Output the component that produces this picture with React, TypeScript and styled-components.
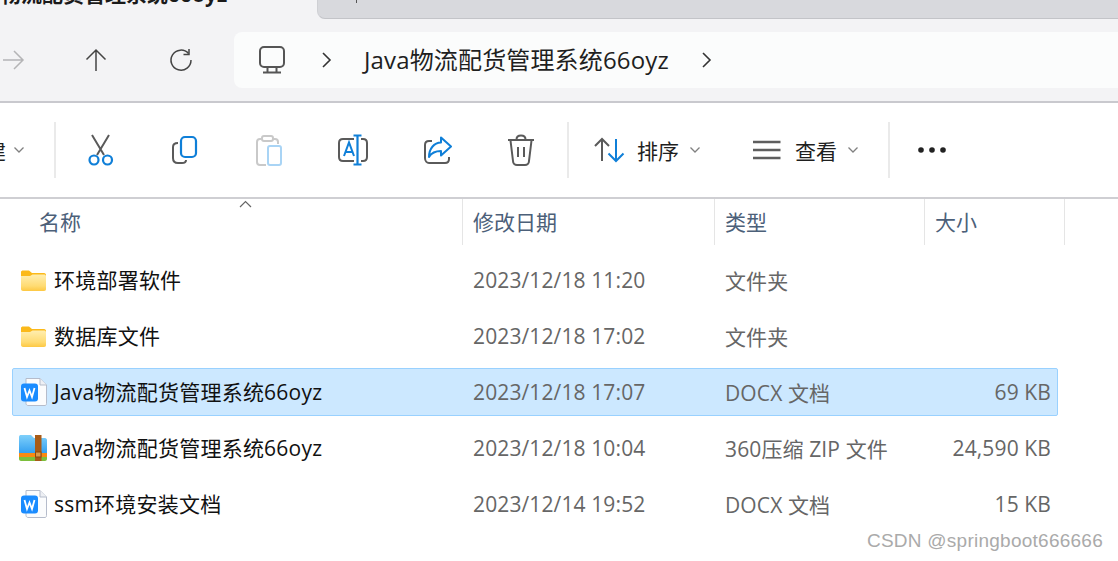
import React from "react";
import styled, { createGlobalStyle } from "styled-components";

const UI_FONT = `"Open Sans", "Noto Sans CJK SC", sans-serif`;

const GlobalStyle = createGlobalStyle`
    html, body {
        margin: 0;
        padding: 0;
        background: #ffffff;
    }
    * {
        box-sizing: border-box;
    }
`;

const Page = styled.div`
    position: relative;
    width: 1118px;
    height: 561px;
    overflow: hidden;
    background: #ffffff;
    font-family: ${UI_FONT};
`;

const TabStrip = styled.div`
    display: flex;
    height: 19px;
    background: #f3f3f5;
    overflow: hidden;
`;

const ActiveTab = styled.div`
    width: 317px;
    height: 19px;
    display: flex;
    align-items: flex-end;
    overflow: hidden;
    font-size: 21px;
    font-weight: 700;
    line-height: 33px;
    color: #1a1a1a;
    white-space: nowrap;
`;

const ActiveTitle = styled.span`
    margin-bottom: 8px;
`;

const InactiveTab = styled.div`
    flex: 1;
    background: #d8d9dd;
    border-bottom: 1px solid #c3c4c8;
    border-left: 1px solid #cfd0d4;
    border-bottom-left-radius: 8px;
    padding-left: 38px;
`;

const NewTabStub = styled.div`
    width: 1px;
    height: 3px;
    background: #555;
`;

const NavBar = styled.div`
    display: flex;
    align-items: center;
    height: 84px;
    background: #f3f3f5;
    border-bottom: 2px solid #c9c9ce;
`;

const NavButton = styled.div<{ $width: number }>`
    width: ${p => p.$width}px;
    display: flex;
    justify-content: center;
    flex-shrink: 0;
`;

const AddressBar = styled.div`
    flex: 1;
    height: 56px;
    display: flex;
    align-items: center;
    background: #fbfcfc;
    border-radius: 8px 0 0 8px;
    padding-left: 24px;
`;

const CrumbSlot = styled.div`
    display: flex;
    margin-left: 35px;
`;

const Crumb = styled.span`
    font-size: 24px;
    letter-spacing: 0.15px;
    color: #1f1f1f;
    white-space: nowrap;
    margin: 0 32px 3px 31px;
`;

const Toolbar = styled.div`
    display: flex;
    align-items: center;
    height: 96px;
    background: #ffffff;
    border-bottom: 2px solid #cfcfd3;
`;

const ClippedLabel = styled.div`
    width: 6px;
    display: flex;
    justify-content: flex-end;
    overflow: hidden;
    font-size: 21px;
    color: #1f1f1f;
    margin-right: 7px;
`;

const ClippedGlyph = styled.span`
    flex-shrink: 0;
`;

const ToolDivider = styled.div<{ $left: number; $right: number }>`
    width: 2px;
    height: 56px;
    background: #eaeaea;
    margin-left: ${p => p.$left}px;
    margin-right: ${p => p.$right}px;
    flex-shrink: 0;
`;

const ToolButton = styled.div`
    width: 84px;
    display: flex;
    justify-content: center;
    flex-shrink: 0;
`;

const MenuButton = styled.div<{ $gap: number }>`
    display: flex;
    align-items: center;
    flex-shrink: 0;
    font-size: 21px;
    color: #1f1f1f;
    margin-left: ${p => p.$gap}px;
`;

const MenuLabel = styled.span`
    margin-left: 12px;
    margin-right: 10px;
`;

const HeaderRow = styled.div`
    position: relative;
    display: grid;
    grid-template-columns: 463px 252px 210px 140px;
    height: 46px;
`;

const HeaderCell = styled.div<{ $pad: number }>`
    display: flex;
    align-items: center;
    padding-left: ${p => p.$pad}px;
    padding-bottom: 2px;
    border-right: 1px solid #e5e5e5;
    font-size: 21px;
    color: #4c6079;
`;

const SortCaret = styled.svg`
    position: absolute;
    left: 239px;
    top: 1px;
`;

const FileList = styled.div`
    display: flex;
    flex-direction: column;
    gap: 8px;
    padding: 11px 0 0 12px;
`;

const FileRow = styled.div<{ $selected?: boolean }>`
    width: 1046px;
    height: 48px;
    display: grid;
    grid-template-columns: 450px 252px 210px 134px;
    align-items: center;
    background: ${p => (p.$selected ? "#cce8ff" : "transparent")};
    border: 1px solid ${p => (p.$selected ? "#99d1ff" : "transparent")};
    border-radius: 2px;
    font-size: 21px;
    letter-spacing: 0.12px;
    color: #666666;
    white-space: nowrap;
`;

const NameCell = styled.div`
    display: flex;
    align-items: center;
    padding-left: 5px;
    color: #111111;
`;

const FileName = styled.span`
    margin: 0 0 2px 6px;
    letter-spacing: 0.22px;
`;

const MetaCell = styled.div`
    padding-left: 10px;
`;

const SizeCell = styled.div`
    text-align: right;
    padding-right: 8px;
`;

const Watermark = styled.div`
    position: absolute;
    right: 15px;
    bottom: 9px;
    font-family: "Liberation Sans", sans-serif;
    font-size: 19px;
    color: #aaaaaa;
    letter-spacing: 0.25px;
`;

const GRAY = "#5a5a5a";
const BLUE = "#0f7fd8";

const Chevron = () => (
    <svg width="12" height="8" viewBox="0 0 12 8" fill="none" stroke="#808080" strokeWidth="1.3">
        <path d="M1.5 1.5 L6 6 L10.5 1.5" />
    </svg>
);

const CrumbArrow = () => (
    <svg width="12" height="20" viewBox="0 0 12 20" fill="none" stroke="#333" strokeWidth="1.6">
        <path d="M2 3 L9 10 L2 17" />
    </svg>
);

const ForwardIcon = () => (
    <svg width="24" height="24" viewBox="0 0 24 24" fill="none" stroke="#b4b4b6" strokeWidth="1.5">
        <path d="M2 12 H22 M13 3 L22 12 L13 21" />
    </svg>
);

const UpIcon = () => (
    <svg width="24" height="24" viewBox="0 0 24 24" fill="none" stroke="#444" strokeWidth="1.5">
        <path d="M12 23 V2 M2.5 11.5 L12 2 L21.5 11.5" />
    </svg>
);

const RefreshIcon = () => (
    <svg width="24" height="24" viewBox="0 0 24 24" fill="none" stroke="#444" strokeWidth="1.5">
        <path d="M19.5 5.5 A10 10 0 1 0 22 12" />
        <path d="M20 1 V6.5 H14.5" />
    </svg>
);

const MonitorIcon = () => (
    <svg width="28" height="30" viewBox="0 0 28 30" fill="none" stroke="#555" strokeWidth="2">
        <rect x="2" y="2" width="24" height="20" rx="4" />
        <path d="M9.5 22 V27 M18.5 22 V27 M5 27.5 H23" />
    </svg>
);

const ScissorsIcon = () => (
    <svg width="32" height="32" viewBox="0 0 32 32" fill="none" strokeWidth="2">
        <path d="M8 1 L20 21 M25 1 L13 21" stroke={GRAY} />
        <circle cx="10" cy="26" r="4.5" stroke={BLUE} strokeWidth="2.2" />
        <circle cx="23.5" cy="26" r="4.5" stroke={BLUE} strokeWidth="2.2" />
    </svg>
);

const CopyIcon = () => (
    <svg width="32" height="32" viewBox="0 0 32 32" fill="none" strokeWidth="2">
        <path d="M10 9 C6 9 5 11 5 13 V24 C5 27 7 29 10 29 H14 C16 29 18 28 18 26" stroke={GRAY} />
        <rect x="13" y="3" width="15" height="20" rx="4" stroke={BLUE} strokeWidth="2.2" fill="#ffffff" />
    </svg>
);

const PasteIcon = () => (
    <svg width="32" height="32" viewBox="0 0 32 32" fill="none" strokeWidth="2">
        <path d="M10 5 H8 C6 5 5 6 5 8 V28 C5 30 6 31 8 31 H14 M21 5 H23 C25 5 26 6 26 8 V10" stroke="#c9c9c9" />
        <rect x="10" y="2" width="11" height="5" rx="2" stroke="#c9c9c9" />
        <rect x="16" y="12" width="13" height="19" rx="2" stroke="#a9d4f5" />
    </svg>
);

const RenameIcon = () => (
    <svg width="32" height="32" viewBox="0 0 32 32" fill="none" strokeWidth="2">
        <path d="M18 5 H7 C4 5 3 7 3 9 V23 C3 25 4 27 7 27 H18 M25 5 H27 C30 5 31 7 31 9 V23 C31 25 30 27 27 27 H25" stroke={GRAY} />
        <path d="M8 22 L13 8.5 L18 22 M9.5 18 H16.5" stroke={BLUE} />
        <path d="M21.5 1 V31 M17.5 1.5 H25.5 M17.5 30.5 H25.5" stroke={BLUE} strokeWidth="2.2" />
    </svg>
);

const ShareIcon = () => (
    <svg width="32" height="32" viewBox="0 0 32 32" fill="none" strokeWidth="2">
        <path d="M12 7 H9 C6 7 5 9 5 11 V24 C5 27 7 29 9 29 H25 C28 29 29 27 29 25 V23" stroke={GRAY} />
        <path d="M21 3.5 L31 12.5 L21 21.5 V17 C16 17 12 18 9 23 C9 15 14 8.5 21 8.5 Z" stroke={BLUE} strokeLinejoin="round" />
    </svg>
);

const TrashIcon = () => (
    <svg width="32" height="32" viewBox="0 0 32 32" fill="none" stroke={GRAY} strokeWidth="2">
        <path d="M4 6 H30 M12.5 5.5 C12.5 3 14 1.5 17 1.5 C20 1.5 21.5 3 21.5 5.5" />
        <path d="M6.5 6.5 L9 27 C9 29.5 11 31 13 31 H21 C23 31 25 29.5 25 27 L27.5 6.5" />
        <path d="M14 13 V23 M20 13 V23" />
    </svg>
);

const SortIcon = () => (
    <svg width="32" height="32" viewBox="0 0 32 32" fill="none" strokeWidth="2">
        <path d="M9 27 V5 M2 12 L9 5 L16 12" stroke={GRAY} />
        <path d="M23 5 V27 M15.5 19.5 L23 27 L30.5 19.5" stroke={BLUE} />
    </svg>
);

const ViewIcon = () => (
    <svg width="30" height="24" viewBox="0 0 30 24" fill="none" stroke="#5e5e5e" strokeWidth="2.6">
        <path d="M0 4 H27.5 M0 12 H27.5 M0 20 H27.5" />
    </svg>
);

const MoreIcon = () => (
    <svg width="30" height="8" viewBox="0 0 30 8" fill="#222222">
        <circle cx="4" cy="4" r="2.8" />
        <circle cx="15" cy="4" r="2.8" />
        <circle cx="26" cy="4" r="2.8" />
    </svg>
);

const FolderIcon = () => (
    <svg width="30" height="28" viewBox="0 0 30 28">
        <defs>
            <linearGradient id="folderBody" x1="0" y1="0" x2="0" y2="1">
                <stop offset="0" stopColor="#ffeeb0" />
                <stop offset="0.7" stopColor="#ffdb72" />
                <stop offset="1" stopColor="#fdc843" />
            </linearGradient>
        </defs>
        <path d="M3 6 C3 5 4 4.5 5 4.5 H11 L14 7 H26 C27.5 7 28 8 28 9 V11 H3 Z" fill="#fbb91a" />
        <path d="M3 10 H12 L14.5 8.5 H26.5 C27.5 8.5 28 9.5 28 10.5 V23 C28 24 27.5 25 26 25 H5 C4 25 3 24 3 23 Z" fill="url(#folderBody)" />
    </svg>
);

const WpsDocIcon = () => (
    <svg width="30" height="30" viewBox="0 0 30 30">
        <path d="M8 1.5 H22 L28.5 8 V26.5 C28.5 27.5 28 28.5 27 28.5 H10 C9 28.5 8 27.5 8 26.5 Z" fill="#fbfcfd" stroke="#b5bccb" />
        <path d="M22 1.5 V8 H28.5" fill="#eef0f4" stroke="#b5bccb" />
        <rect x="3" y="6.5" width="17" height="18" rx="3" fill="#1a8cff" />
        <path d="M6.5 11 L9 20 L11.5 13.5 L14 20 L16.5 11" fill="none" stroke="#ffffff" strokeWidth="1.8" />
    </svg>
);

const ZipIcon = () => (
    <svg width="30" height="30" viewBox="0 0 30 30">
        <defs>
            <linearGradient id="zipBody" x1="0" y1="0" x2="0" y2="1">
                <stop offset="0" stopColor="#7fd0fa" />
                <stop offset="1" stopColor="#2f9df0" />
            </linearGradient>
        </defs>
        <path d="M1 4 C1 2.5 2 2 3 2 H13 L16 5 H27 C28 5 29 6 29 7 V21 H1 Z" fill="url(#zipBody)" />
        <rect x="1" y="20" width="28" height="4" fill="#f88a12" />
        <path d="M1 24 H29 V26 C29 27 28 28 27 28 H3 C2 28 1 27 1 26 Z" fill="#7cbf3c" />
        <rect x="17" y="2" width="6.5" height="26" fill="#a85b17" />
        <rect x="17.5" y="19" width="5.5" height="5" fill="#d99a4a" stroke="#8a4a10" />
    </svg>
);

type FileKind = "folder" | "doc" | "zip";

interface FileEntry {
    name: string;
    date: string;
    type: string;
    size: string;
    kind: FileKind;
    selected?: boolean;
}

const FILES: FileEntry[] = [
    { name: "环境部署软件", date: "2023/12/18 11:20", type: "文件夹", size: "", kind: "folder" },
    { name: "数据库文件", date: "2023/12/18 17:02", type: "文件夹", size: "", kind: "folder" },
    { name: "Java物流配货管理系统66oyz", date: "2023/12/18 17:07", type: "DOCX 文档", size: "69 KB", kind: "doc", selected: true },
    { name: "Java物流配货管理系统66oyz", date: "2023/12/18 10:04", type: "360压缩 ZIP 文件", size: "24,590 KB", kind: "zip" },
    { name: "ssm环境安装文档", date: "2023/12/14 19:52", type: "DOCX 文档", size: "15 KB", kind: "doc" },
];

const KIND_ICONS: Record<FileKind, React.FC> = {
    folder: FolderIcon,
    doc: WpsDocIcon,
    zip: ZipIcon,
};

const App = () => {
    return (
        <Page>
            <GlobalStyle />
            <TabStrip>
                <ActiveTab>
                    <ActiveTitle>物流配货管理系统66oyz</ActiveTitle>
                </ActiveTab>
                <InactiveTab>
                    <NewTabStub />
                </InactiveTab>
            </TabStrip>
            <NavBar>
                <NavButton $width={25}><ForwardIcon /></NavButton>
                <NavButton $width={142}><UpIcon /></NavButton>
                <NavButton $width={27}><RefreshIcon /></NavButton>
                <NavButton $width={40} />
                <AddressBar>
                    <MonitorIcon />
                    <CrumbSlot><CrumbArrow /></CrumbSlot>
                    <Crumb>Java物流配货管理系统66oyz</Crumb>
                    <CrumbArrow />
                </AddressBar>
            </NavBar>
            <Toolbar>
                <ClippedLabel><ClippedGlyph>新建</ClippedGlyph></ClippedLabel>
                <Chevron />
                <ToolDivider $left={29} $right={2} />
                <ToolButton><ScissorsIcon /></ToolButton>
                <ToolButton><CopyIcon /></ToolButton>
                <ToolButton><PasteIcon /></ToolButton>
                <ToolButton><RenameIcon /></ToolButton>
                <ToolButton><ShareIcon /></ToolButton>
                <ToolButton><TrashIcon /></ToolButton>
                <ToolDivider $left={5} $right={0} />
                <MenuButton $gap={24}>
                    <SortIcon />
                    <MenuLabel>排序</MenuLabel>
                    <Chevron />
                </MenuButton>
                <MenuButton $gap={52}>
                    <ViewIcon />
                    <MenuLabel>查看</MenuLabel>
                    <Chevron />
                </MenuButton>
                <ToolDivider $left={29} $right={27} />
                <MoreIcon />
            </Toolbar>
            <HeaderRow>
                <SortCaret width="13" height="8" viewBox="0 0 13 8" fill="none" stroke="#666" strokeWidth="1.2">
                    <path d="M1 7 L6.5 1.5 L12 7" />
                </SortCaret>
                <HeaderCell $pad={39}>名称</HeaderCell>
                <HeaderCell $pad={10}>修改日期</HeaderCell>
                <HeaderCell $pad={10}>类型</HeaderCell>
                <HeaderCell $pad={10}>大小</HeaderCell>
            </HeaderRow>
            <FileList>
                {FILES.map(file => {
                    const Icon = KIND_ICONS[file.kind];
                    return (
                        <FileRow key={file.date} $selected={file.selected}>
                            <NameCell>
                                <Icon />
                                <FileName>{file.name}</FileName>
                            </NameCell>
                            <MetaCell>{file.date}</MetaCell>
                            <MetaCell>{file.type}</MetaCell>
                            <SizeCell>{file.size}</SizeCell>
                        </FileRow>
                    );
                })}
            </FileList>
            <Watermark>CSDN @springboot666666</Watermark>
        </Page>
    );
};

export default App;
